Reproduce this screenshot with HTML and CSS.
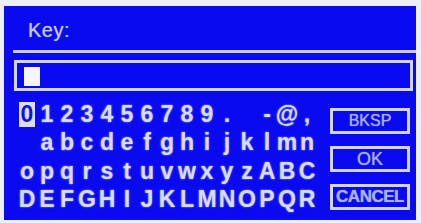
FILE: index.html
```html
<!DOCTYPE html>
<html>
<head>
<meta charset="utf-8">
<link rel="stylesheet" href="styles.css">
</head>
<body>
<div class="panel">
  <div class="title">Key:</div>
  <div class="rule"></div>
  <div class="input"><span class="cursor"></span></div>
  <div class="main">
    <div class="keys">
      <span class="k"><span class="sel">0</span></span><span class="k">1</span><span class="k">2</span><span class="k">3</span><span class="k">4</span><span class="k">5</span><span class="k">6</span><span class="k">7</span><span class="k">8</span><span class="k">9</span><span class="k">.</span><span class="k"> </span><span class="k">-</span><span class="k">@</span><span class="k">,</span>
      <span class="k"> </span><span class="k">a</span><span class="k">b</span><span class="k">c</span><span class="k">d</span><span class="k">e</span><span class="k">f</span><span class="k">g</span><span class="k">h</span><span class="k">i</span><span class="k">j</span><span class="k">k</span><span class="k">l</span><span class="k">m</span><span class="k">n</span>
      <span class="k">o</span><span class="k">p</span><span class="k">q</span><span class="k">r</span><span class="k">s</span><span class="k">t</span><span class="k">u</span><span class="k">v</span><span class="k">w</span><span class="k">x</span><span class="k">y</span><span class="k">z</span><span class="k">A</span><span class="k">B</span><span class="k">C</span>
      <span class="k">D</span><span class="k">E</span><span class="k">F</span><span class="k">G</span><span class="k">H</span><span class="k">I</span><span class="k">J</span><span class="k">K</span><span class="k">L</span><span class="k">M</span><span class="k">N</span><span class="k">O</span><span class="k">P</span><span class="k">Q</span><span class="k">R</span>
    </div>
    <div class="buttons">
      <div class="btn bksp">BKSP</div>
      <div class="btn">OK</div>
      <div class="btn cancel">CANCEL</div>
    </div>
  </div>
</div>
</body>
</html>
```

FILE: styles.css
```css
html, body {
  margin: 0;
  padding: 0;
}
body {
  background: #eeeef6;
  width: 421px;
  height: 223px;
  overflow: hidden;
  font-family: "Liberation Sans", Arial, sans-serif;
}
.panel {
  margin: 6px 0 0 4px;
  width: 412px;
  height: 214px;
  background: #0a0af0;
  display: flex;
  flex-direction: column;
  color: #d6daff;
}
.title {
  padding: 14px 0 0 24px;
  font-size: 20px;
  line-height: 20px;
  letter-spacing: 0.5px;
  color: #c8ccff;
  text-shadow: 0 0 1px #8890ff;
}
.rule {
  margin: 10px 0 0 9px;
  width: 403px;
  height: 3px;
  background: #c8ccff;
}
.input {
  margin: 7px 0 0 10px;
  width: 399px;
  height: 31px;
  box-sizing: border-box;
  border: 3px solid #d0d4ff;
  padding: 4px 0 0 7px;
}
.cursor {
  display: block;
  width: 16px;
  height: 19px;
  background: #f4f4ff;
}
.main {
  display: flex;
  align-items: flex-start;
  margin: 9px 0 0 13px;
}
.keys {
  display: grid;
  grid-template-columns: repeat(15, 20px);
  grid-auto-rows: 28.5px;
  font-weight: bold;
  font-size: 23px;
  color: #d8dcff;
  text-shadow: 0 0 2px #a0a8ff;
}
.k {
  display: flex;
  align-items: center;
  justify-content: center;
  white-space: pre;
}
.sel {
  display: flex;
  align-items: center;
  justify-content: center;
  width: 16px;
  height: 25px;
  background: #dcdcff;
  color: #1010e0;
  text-shadow: none;
}
.buttons {
  margin-left: 13px;
  padding-top: 8px;
  display: flex;
  flex-direction: column;
  gap: 12px;
}
.btn {
  width: 80px;
  height: 26px;
  box-sizing: border-box;
  border: 3px solid #d0d4ff;
  display: flex;
  align-items: center;
  justify-content: center;
  font-size: 18px;
  color: #aab2ff;
  text-shadow: 0 0 1px #9098ff;
}
.bksp {
  font-size: 16px;
}
.cancel {
  font-size: 17px;
  letter-spacing: -0.5px;
  font-weight: bold;
}
```
